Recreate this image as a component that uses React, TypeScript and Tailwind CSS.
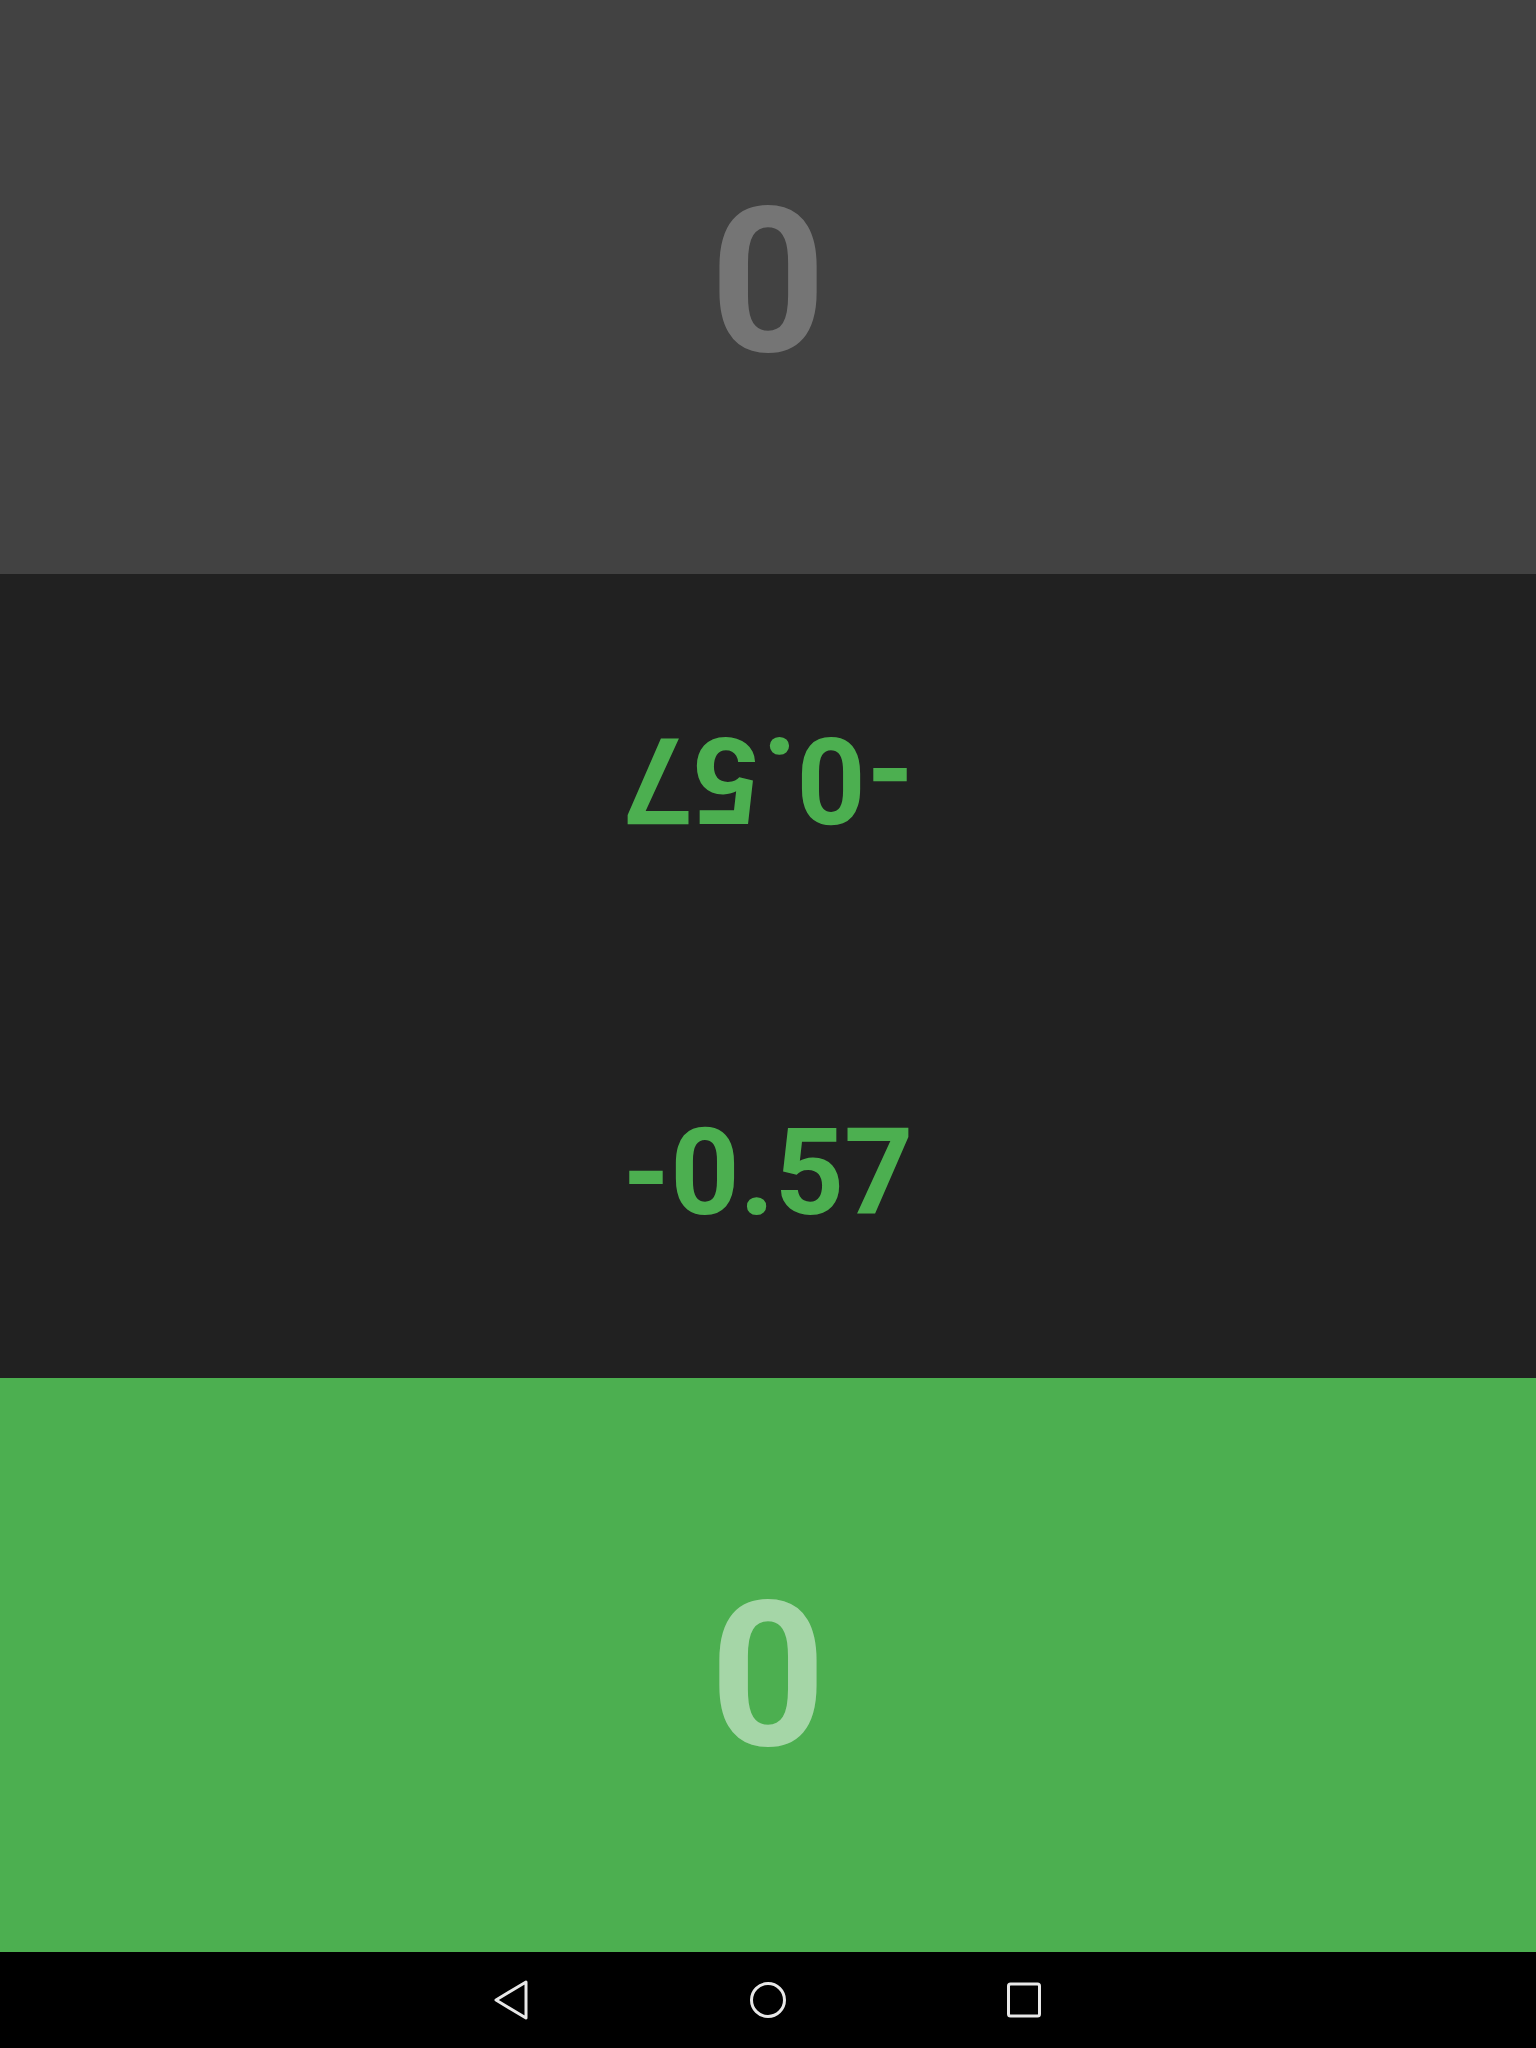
const font = "font-['Roboto','Liberation_Sans',sans-serif] font-bold";

type PlayerProps = {
    life: number;
    diff: string;
    panelBg: string;
    lifeColor: string;
    flipped?: boolean;
};

const Player = ({ life, diff, panelBg, lifeColor, flipped }: PlayerProps) => {
    return (
        <div className={`flex h-[976px] flex-col ${flipped ? 'rotate-180' : ''}`}>
            <div className="flex h-[402px] justify-center bg-[#212121] pt-[137px]">
                <span className={`${font} text-[121px] leading-none text-[#4caf50]`}>{diff}</span>
            </div>
            <div className={`flex h-[574px] justify-center pt-[197px] ${panelBg}`}>
                <span className={`${font} text-[202px] leading-none ${lifeColor}`}>{life}</span>
            </div>
        </div>
    );
};

const NavBar = () => (
    <div className="flex h-[96px] items-center justify-center gap-[220px] bg-black">
        <svg width="36" height="40" viewBox="0 0 36 40" fill="none" stroke="#e8e8e8" strokeWidth="3" strokeLinejoin="round">
            <path d="M32 2 L2 20 L32 38 Z" />
        </svg>
        <svg width="36" height="40" viewBox="0 0 36 40" fill="none" stroke="#e8e8e8" strokeWidth="3">
            <circle cx="18" cy="20" r="16.5" />
        </svg>
        <svg width="36" height="40" viewBox="0 0 36 40" fill="none" stroke="#e8e8e8" strokeWidth="3">
            <rect x="2.5" y="4" width="31" height="32" rx="2" />
        </svg>
    </div>
);

export default function App() {
    return (
        <div className="flex h-[2048px] w-full flex-col">
            <Player life={0} diff="-0.57" panelBg="bg-[#424242]" lifeColor="text-[#757575]" flipped />
            <Player life={0} diff="-0.57" panelBg="bg-[#4caf50]" lifeColor="text-[#a5d6a7]" />
            <NavBar />
        </div>
    );
}
